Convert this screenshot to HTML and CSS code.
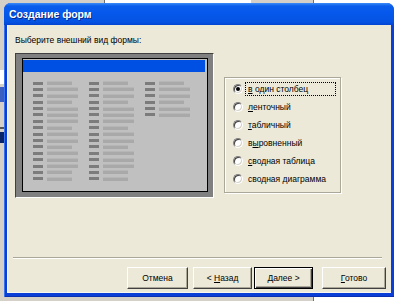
FILE: index.html
```html
<!DOCTYPE html>
<html lang="ru">
  <head>
    <meta charset="UTF-8" />
    <title>Создание форм</title>
    <link rel="stylesheet" href="styles.css">
  </head>
  <body>
    <div class="desk">
      <!-- window behind the wizard -->
      <div class="back">
        <div class="back-top"></div>
        <div class="back-edit"></div>
        <div class="back-sel"></div>
        <div class="back-line"></div>
        <div class="back-navy"></div>
      </div>

      <div class="dialog">
        <div class="caption">Создание форм</div>
        <div class="client">
          <p class="prompt">Выберите внешний вид формы:</p>

          <div class="main">
            <div class="preview">
              <div class="screen">
                <div class="screen-bar"></div>
                <div class="fields">
                  <div class="col">
                    <i></i><b class="s"></b>
                    <i></i><b></b>
                    <i></i><b></b>
                    <i></i><b class="s"></b>
                    <i></i><b></b>
                    <i></i><b></b>
                    <i></i><b></b>
                    <i></i><b class="s"></b>
                    <i></i><b></b>
                    <i></i><b></b>
                    <i></i><b class="s"></b>
                    <i></i><b></b>
                    <i></i><b></b>
                    <i></i><b></b>
                    <i></i><b class="s"></b>
                    <i></i><b class="s"></b>
                  </div>
                  <div class="col">
                    <i></i><b class="s"></b>
                    <i></i><b></b>
                    <i></i><b></b>
                    <i></i><b class="s"></b>
                    <i></i><b></b>
                    <i></i><b></b>
                    <i></i><b></b>
                    <i></i><b class="s"></b>
                    <i></i><b></b>
                    <i></i><b></b>
                    <i></i><b class="s"></b>
                    <i></i><b></b>
                    <i></i><b></b>
                    <i></i><b></b>
                    <i></i><b class="s"></b>
                    <i></i><b class="s"></b>
                  </div>
                  <div class="col">
                    <i></i><b class="s"></b>
                    <i></i><b></b>
                    <i></i><b></b>
                    <i></i><b class="s"></b>
                    <i></i><b></b>
                    <i></i><b></b>
                  </div>
                </div>
              </div>
            </div>

            <div class="group">
              <div class="opt"><span class="radio checked"></span><span class="text focus"><u>в</u> один столбец</span></div>
              <div class="opt"><span class="radio"></span><span class="text"><u>л</u>енточный</span></div>
              <div class="opt"><span class="radio"></span><span class="text"><u>т</u>абличный</span></div>
              <div class="opt"><span class="radio"></span><span class="text">в<u>ы</u>ровненный</span></div>
              <div class="opt"><span class="radio"></span><span class="text"><u>с</u>водная таблица</span></div>
              <div class="opt"><span class="radio"></span><span class="text">сводная <u>д</u>иаграмма</span></div>
            </div>
          </div>

          <div class="sep"></div>

          <div class="buttons">
            <button class="btn cancel">Отмена</button>
            <button class="btn back-btn">&lt; <u>Н</u>азад</button>
            <button class="btn next default"><u>Д</u>алее &gt;</button>
            <button class="btn finish"><u>Г</u>отово</button>
          </div>
        </div>
      </div>
    </div>
  </body>
</html>
```

FILE: styles.css
```css
body {
  margin: 0;
  background-color: #fff;
  font-family: "Liberation Sans", Arial, sans-serif;
}

.desk {
  position: relative;
  width: 409px;
  height: 301px;
  overflow: hidden;
}

/* window in the background */
.back {
  position: absolute;
  left: 0;
  top: 0;
  width: 313px;
  height: 301px;
  background-color: #d4d0c8;
  border-right: 1px solid #707070;
}

.back-top {
  position: absolute;
  left: 104px;
  top: 0;
  width: 146px;
  height: 3px;
  background-color: #fff;
  border-left: 1px solid #707070;
}

.back-edit {
  position: absolute;
  left: 0;
  top: 70px;
  width: 4px;
  height: 14px;
  background-color: #fff;
}

.back-sel {
  position: absolute;
  left: 0;
  top: 87px;
  width: 4px;
  height: 15px;
  background-color: #3a5fc0;
}

.back-line {
  position: absolute;
  left: 0;
  top: 127px;
  width: 4px;
  height: 2px;
  background-color: #555;
}

.back-navy {
  position: absolute;
  left: 0;
  top: 132px;
  width: 4px;
  height: 11px;
  background-color: #0a246a;
}

/* wizard window */
.dialog {
  position: absolute;
  left: 4px;
  top: 3px;
  width: 390px;
  padding-bottom: 4px;
  background-color: #0a3ed6;
  border-radius: 7px 7px 0 0;
  box-shadow: inset 1px 0 0 #3a72ec, inset 0 -1px 0 #0a2fb0;
}

.caption {
  height: 22px;
  padding-left: 5px;
  line-height: 23px;
  border-radius: 7px 7px 0 0;
  background: linear-gradient(to bottom, #3c8cf8 0, #0b5eea 3px, #0558ec 45%, #0553e2 85%, #0344d2 100%);
  color: #fff;
  font-size: 10.5px;
  font-weight: bold;
  text-shadow: 1px 1px 0 #0a2a8a;
}

.client {
  margin: 0 3px;
  height: 268px;
  background-color: #ece9d8;
  box-shadow: inset 1px 0 0 #f8f7f0, inset 0 -1px 0 #f8f7f0;
  font-size: 8.5px;
  color: #000;
}

.prompt {
  margin: 0;
  padding: 9px 0 0 8px;
  line-height: 12px;
}

.main {
  display: flex;
  align-items: flex-start;
  margin-top: 7px;
}

/* form preview picture */
.preview {
  box-sizing: border-box;
  width: 199px;
  height: 145px;
  margin-left: 8px;
  padding: 4px 5px 5px 6px;
  background-color: #808080;
  border: 1px solid;
  border-color: #404040 #fff #fff #404040;
}

.screen {
  height: 100%;
  box-sizing: border-box;
  padding-top: 1px;
  background-color: #c0c0c0;
  border: 1px solid #000;
}

.screen-bar {
  height: 12px;
  margin-right: 2px;
  background-color: #0050e4;
}

.fields {
  display: flex;
  gap: 11px;
  padding: 9px 0 0 10px;
}

.col {
  display: grid;
  grid-template-columns: 10px 31px;
  grid-auto-rows: 4px;
  column-gap: 4px;
  row-gap: 2.4px;
  align-items: center;
}

.col i {
  height: 3px;
  background-color: #7c7c7c;
}

.col b {
  height: 4px;
  background-color: #a9a9a9;
  box-shadow: inset 0 1px 0 #b6b6b6;
}

.col b.s {
  width: 25px;
}

/* option buttons */
.group {
  box-sizing: border-box;
  width: 117px;
  height: 116px;
  margin: 24px 0 0 10px;
  padding: 2px 0 0 8px;
  border: 1px solid #aca899;
  box-shadow: 1px 1px 0 #fff, inset 1px 1px 0 #fff;
}

.opt {
  display: flex;
  align-items: center;
  height: 18px;
}

.radio {
  position: relative;
  box-sizing: border-box;
  width: 10px;
  height: 10px;
  border-radius: 50%;
  background-color: #fff;
  border: 1px solid;
  border-color: #808080 #fff #fff #808080;
  box-shadow: inset 1px 1px 0 #404040, inset -1px -1px 0 #d4d0c8;
}

.radio.checked::after {
  content: "";
  position: absolute;
  left: 2px;
  top: 2px;
  width: 4px;
  height: 4px;
  border-radius: 50%;
  background-color: #000;
}

.text {
  box-sizing: border-box;
  width: 91px;
  height: 14px;
  margin-left: 2px;
  padding-left: 2px;
  line-height: 12px;
  border: 1px solid transparent;
  white-space: nowrap;
}

.text.focus {
  border: 1px dotted #000;
}

.sep {
  width: 369px;
  margin: 59px 0 0 6px;
  border-top: 1px solid #aca899;
  border-bottom: 1px solid #fff;
}

.buttons {
  display: flex;
  margin: 8px 0 0 120px;
}

.btn {
  box-sizing: border-box;
  height: 22px;
  padding: 0;
  background-color: #ece9d8;
  border: 1px solid;
  border-color: #fff #404040 #404040 #fff;
  box-shadow: inset -1px -1px 0 #aca899;
  font-family: "Liberation Sans", Arial, sans-serif;
  font-size: 8.5px;
  color: #000;
}

.btn.default {
  border: 1px solid #000;
  box-shadow: inset 1px 1px 0 #fff, inset -1px -1px 0 #404040, inset -2px -2px 0 #aca899;
}

.cancel {
  width: 61px;
}

.back-btn {
  width: 59px;
  margin-left: 5px;
}

.next {
  width: 59px;
  margin-left: 2px;
}

.finish {
  width: 64px;
  margin-left: 9px;
}
```
